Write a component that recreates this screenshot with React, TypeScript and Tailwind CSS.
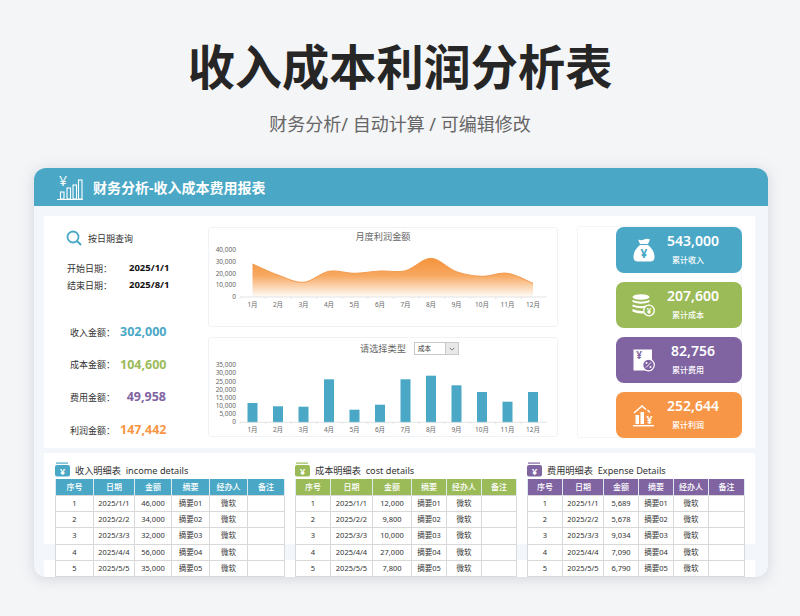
import { ReactNode } from "react";

const CJK = "font-['Noto_Sans','Noto_Sans_CJK_SC',sans-serif]";
const MONTHS = ["1月", "2月", "3月", "4月", "5月", "6月", "7月", "8月", "9月", "10月", "11月", "12月"];
const monthX = (i: number) => 43.5 + i * 25.5;

// read off the reference, svg coords
const PROFIT_Y = [18, 29, 36.3, 25.3, 27.3, 25, 24.7, 12.3, 25.7, 30.3, 27.3, 37.3];
const COST_TOPS = [44, 47.3, 47.7, 20.3, 50.7, 45.7, 20.3, 16.7, 26.3, 33, 42.7, 33];

function smoothPath(ys: number[]) {
  const pts = ys.map((y, i) => [monthX(i), y]);
  let d = `M${pts[0][0]} ${pts[0][1]}`;
  for (let i = 0; i < pts.length - 1; i++) {
    const p0 = pts[Math.max(i - 1, 0)];
    const p1 = pts[i];
    const p2 = pts[i + 1];
    const p3 = pts[Math.min(i + 2, pts.length - 1)];
    const c1x = p1[0] + (p2[0] - p0[0]) / 6;
    const c1y = p1[1] + (p2[1] - p0[1]) / 6;
    const c2x = p2[0] - (p3[0] - p1[0]) / 6;
    const c2y = p2[1] - (p3[1] - p1[1]) / 6;
    d += ` C${c1x} ${c1y} ${c2x} ${c2y} ${p2[0]} ${p2[1]}`;
  }
  return d;
}

function Axis({ y, labels }: { y: number; labels: [string, number][] }) {
  return (
    <g fontFamily="'Noto Sans','Noto Sans CJK SC',sans-serif" fontSize="6.5" fill="#666">
      {labels.map(([t, ly]) => (
        <text key={t} x="27" y={ly + 2.3} textAnchor="end">{t}</text>
      ))}
      <line x1="31" x2="338" y1={y} y2={y} stroke="#d9d9d9" strokeWidth="0.7" />
      {MONTHS.map((m, i) => (
        <g key={m}>
          <line x1={31 + i * 25.58} x2={31 + i * 25.58} y1={y} y2={y + 2} stroke="#d9d9d9" strokeWidth="0.7" />
          <text x={monthX(i)} y={y + 9.5} textAnchor="middle">{m}</text>
        </g>
      ))}
    </g>
  );
}

function ProfitChart() {
  const line = smoothPath(PROFIT_Y);
  return (
    <svg viewBox="0 0 348 80" className="w-[348px] h-[80px]">
      <defs>
        <linearGradient id="profitFill" x1="0" y1="0" x2="0" y2="1">
          <stop offset="0" stopColor="#f5933a" />
          <stop offset="0.45" stopColor="#f5933a" stopOpacity="0.8" />
          <stop offset="1" stopColor="#f5933a" stopOpacity="0.02" />
        </linearGradient>
      </defs>
      <path d={`${line} L${monthX(11)} 51 L${monthX(0)} 51 Z`} fill="url(#profitFill)" />
      <path d={line} fill="none" stroke="#f39a4c" strokeWidth="1" />
      <Axis y={51} labels={[["40,000", 4], ["30,000", 15.7], ["20,000", 27.3], ["10,000", 39], ["0", 51]]} />
    </svg>
  );
}

function CostChart() {
  return (
    <svg viewBox="0 0 348 78" className="w-[348px] h-[78px]">
      {COST_TOPS.map((t, i) => (
        <rect key={i} x={monthX(i) - 5} y={t} width="10" height={63.3 - t} fill="#4aa8c6" />
      ))}
      <Axis
        y={63.3}
        labels={[["35,000", 6], ["30,000", 14.1], ["25,000", 22.3], ["20,000", 30.4], ["15,000", 38.6], ["10,000", 46.7], ["5,000", 54.9], ["0", 63]]}
      />
    </svg>
  );
}

const BagIcon = () => (
  <svg viewBox="0 0 22 24" className="w-[22px] h-[24px]">
    <path d="M5 1.5 Q8 3 11 1.5 Q14 0 17 1.5 L15 6 H7 Z" fill="#fff" />
    <path d="M7 7 H15 Q21.5 12 21.5 19 Q21.5 23.5 17 23.5 H5 Q0.5 23.5 0.5 19 Q0.5 12 7 7 Z" fill="#fff" />
    <text x="11" y="20" textAnchor="middle" fontSize="12" fontWeight="700" fill="#4aa8c6" fontFamily="'Noto Sans',sans-serif">¥</text>
  </svg>
);

const CoinsIcon = () => (
  <svg viewBox="0 0 23 23" className="w-[23px] h-[23px]">
    <ellipse cx="9" cy="3" rx="8.5" ry="2.8" fill="#fff" />
    <path d="M0.5 6 Q9 9.5 17.5 6 V8 Q9 11.5 0.5 8 Z" fill="#fff" />
    <path d="M0.5 10.5 Q9 14 17.5 10.5 V12.5 Q9 16 0.5 12.5 Z" fill="#fff" />
    <path d="M0.5 15 Q6 17.5 11 17 L12 19.5 Q5 20 0.5 17.5 Z" fill="#fff" />
    <circle cx="17" cy="16.5" r="5.3" fill="#9bbb59" stroke="#fff" strokeWidth="1.3" />
    <text x="17" y="19.5" textAnchor="middle" fontSize="8" fontWeight="700" fill="#fff" fontFamily="'Noto Sans',sans-serif">¥</text>
  </svg>
);

const FeeIcon = () => (
  <svg viewBox="0 0 22 23" className="w-[22px] h-[23px]">
    <rect x="0.5" y="0.5" width="18.5" height="21" fill="#fff" />
    <text x="6" y="9.5" textAnchor="middle" fontSize="10" fontWeight="700" fill="#8064a2" fontFamily="'Noto Sans',sans-serif">¥</text>
    <circle cx="15.5" cy="16" r="5.8" fill="#8064a2" stroke="#fff" strokeWidth="1.2" />
    <path d="M18 13.5 L13 18.5" stroke="#fff" strokeWidth="1" />
    <circle cx="13.5" cy="14" r="1" fill="#fff" />
    <circle cx="17.5" cy="18" r="1" fill="#fff" />
  </svg>
);

const ProfitIcon = () => (
  <svg viewBox="0 0 22 23" className="w-[22px] h-[23px]">
    <path d="M1 9 L9 2 L13 5.5 M14.5 6 L17 8.5" fill="none" stroke="#fff" strokeWidth="1.5" />
    <rect x="2.5" y="11" width="3.5" height="9" fill="#fff" />
    <rect x="7.5" y="8" width="3.5" height="12" fill="#fff" />
    <text x="16.5" y="19.5" textAnchor="middle" fontSize="10.5" fontWeight="700" fill="#fff" fontFamily="'Noto Sans',sans-serif">¥</text>
    <rect x="0" y="21" width="21" height="1.4" fill="#fff" />
  </svg>
);

const STATS: { value: string; label: string; bg: string; icon: ReactNode }[] = [
  { value: "543,000", label: "累计收入", bg: "bg-[#4aa8c6]", icon: <BagIcon /> },
  { value: "207,600", label: "累计成本", bg: "bg-[#9bbb59]", icon: <CoinsIcon /> },
  { value: "82,756", label: "累计费用", bg: "bg-[#8064a2]", icon: <FeeIcon /> },
  { value: "252,644", label: "累计利润", bg: "bg-[#f79646]", icon: <ProfitIcon /> },
];

const SUMS = [
  { label: "收入金额：", value: "302,000", color: "text-[#4aa8c6]" },
  { label: "成本金额：", value: "104,600", color: "text-[#9bbb59]" },
  { label: "费用金额：", value: "49,958", color: "text-[#8064a2]" },
  { label: "利润金额：", value: "147,442", color: "text-[#f79646]" },
];

const HEADS = ["序号", "日期", "金额", "摘要", "经办人", "备注"];
const DATES = ["2025/1/1", "2025/2/2", "2025/3/3", "2025/4/4", "2025/5/5"];

const TABLES = [
  {
    title: "收入明细表  income details",
    width: "w-[229px]",
    tint: "bg-[#4aa8c6]",
    fill: "#4aa8c6",
    cols: ["w-[38px]", "w-[41px]", "w-[37px]", "w-[38px]", "w-[38px]", "w-[37px]"],
    amounts: ["46,000", "34,000", "32,000", "56,000", "35,000"],
  },
  {
    title: "成本明细表  cost details",
    width: "w-[221px]",
    tint: "bg-[#9bbb59]",
    fill: "#9bbb59",
    cols: ["w-[35px]", "w-[42px]", "w-[39px]", "w-[35px]", "w-[35px]", "w-[35px]"],
    amounts: ["12,000", "9,800", "10,000", "27,000", "7,800"],
  },
  {
    title: "费用明细表  Expense Details",
    width: "w-[217px]",
    tint: "bg-[#8064a2]",
    fill: "#8064a2",
    cols: ["w-[35px]", "w-[41px]", "w-[35px]", "w-[35px]", "w-[35px]", "w-[36px]"],
    amounts: ["5,689", "5,678", "9,034", "7,090", "6,790"],
  },
];

function DetailTable({ t }: { t: (typeof TABLES)[number] }) {
  return (
    <div className={t.width}>
      <div className="h-[26px] flex items-end pb-[2px] gap-[5px]">
        <svg viewBox="0 0 15 15" className="w-[15px] h-[15px]">
          <rect x="1" y="0.5" width="12" height="1.2" fill={t.fill} />
          <rect x="0" y="3" width="15" height="11.5" rx="2" fill={t.fill} />
          <text x="7.5" y="12.5" textAnchor="middle" fontSize="9" fontWeight="700" fill="#fff" fontFamily="'Noto Sans',sans-serif">¥</text>
        </svg>
        <span className="text-[9.2px] leading-[12px] text-[#333] whitespace-pre">{t.title}</span>
      </div>
      <table className="table-fixed border-collapse w-full text-center bg-white">
        <colgroup>
          {t.cols.map((c, i) => (
            <col key={i} className={c} />
          ))}
        </colgroup>
        <thead>
          <tr className={t.tint}>
            {HEADS.map((h) => (
              <th key={h} className="h-[16.4px] p-0 text-[8px] leading-none font-medium text-white border-x border-[#dfeaf0]">{h}</th>
            ))}
          </tr>
        </thead>
        <tbody>
          {DATES.map((d, i) => (
            <tr key={d} className="h-[16.3px]">
              {[String(i + 1), d, t.amounts[i], `摘要0${i + 1}`, "微软", ""].map((c, j) => (
                <td key={j} className="p-0 text-[7.5px] leading-none text-[#333] border border-[#d9d9d9]">{c}</td>
              ))}
            </tr>
          ))}
        </tbody>
      </table>
    </div>
  );
}

export default function App() {
  return (
    <div className={`w-[800px] h-[616px] overflow-hidden bg-[#f4f5f7] ${CJK}`}>
      <h1 className="pt-[36px] h-[100px] text-center text-[47.2px] leading-[62px] font-bold text-[#262626]">收入成本利润分析表</h1>
      <p className="mt-[11px] h-[57px] text-center text-[18px] leading-[27px] text-[#666]">财务分析/ 自动计算 / 可编辑修改</p>

      <div className="mx-[34px] w-[734px] h-[409px] rounded-[12px] overflow-hidden bg-[#f3f6fa] shadow-[0_2px_14px_rgba(110,125,140,0.25)]">
        <div className="h-[38px] bg-[#4aa8c6] flex items-center pl-[23px] gap-[9px]">
          <svg viewBox="0 0 27 27" className="w-[27px] h-[27px] overflow-visible">
            <text x="6" y="12" textAnchor="middle" fontSize="14" fill="#fff" fontFamily="'Noto Sans',sans-serif">¥</text>
            <g fill="none" stroke="#fff" strokeWidth="1.1">
              <rect x="3.5" y="18" width="3.5" height="7" />
              <rect x="10" y="14" width="3.5" height="11" />
              <rect x="16" y="11" width="3.5" height="14" />
              <rect x="21.5" y="6" width="3.5" height="19" />
            </g>
            <line x1="0" x2="26" y1="25.5" y2="25.5" stroke="#fff" strokeWidth="1.2" />
          </svg>
          <span className="text-[14px] font-bold text-white">财务分析-收入成本费用报表</span>
        </div>

        <div className="mt-[10px] mx-[10px] w-[711px] h-[232px] bg-white flex">
          <div className="w-[164px] text-[#333]">
            <div className="h-[42px] pt-[2px] pl-[22px] flex items-center gap-[6px]">
              <svg viewBox="0 0 16 16" className="w-[16px] h-[16px]">
                <circle cx="7" cy="7" r="5.5" fill="none" stroke="#4aa8c6" strokeWidth="1.8" />
                <path d="M11 11 L15 15" stroke="#4aa8c6" strokeWidth="2" />
              </svg>
              <span className="text-[9px] leading-none">按日期查询</span>
            </div>
            <div className="mt-[2px] pl-[23px]">
              <div className="flex h-[17px] mt-[2px] items-center">
                <span className="w-[62px] text-[9px]">开始日期：</span>
                <span className="text-[9.5px] font-bold text-[#111]">2025/1/1</span>
              </div>
              <div className="flex h-[17px] items-center">
                <span className="w-[62px] text-[9px]">结束日期：</span>
                <span className="text-[9.5px] font-bold text-[#111]">2025/8/1</span>
              </div>
            </div>
            <div className="mt-[22px] pl-[26px]">
              {SUMS.map((s) => (
                <div key={s.label} className="h-[32.7px] flex items-center">
                  <span className="w-[50px] text-[9px] whitespace-nowrap">{s.label}</span>
                  <span className={`w-[46px] text-right text-[12.5px] font-bold whitespace-nowrap ${s.color}`}>{s.value}</span>
                </div>
              ))}
            </div>
          </div>

          <div className="w-[350px] pt-[11px] flex flex-col gap-[10px]">
            <div className="h-[100px] border border-[#f0f3f6] rounded-[3px]">
              <div className="h-[18px] flex items-center justify-center text-[9.2px] text-[#666]">月度利润金额</div>
              <ProfitChart />
            </div>
            <div className="h-[100px] border border-[#f0f3f6] rounded-[3px]">
              <div className="h-[21px] flex items-center">
                <span className="ml-[151px] w-[54px] text-[9.2px] text-[#666]">请选择类型</span>
                <div className="h-[13px] w-[45px] flex border border-[#c9c9c9] bg-white">
                  <span className="flex-1 pl-[3px] text-[6.5px] leading-[11px] text-[#333]">成本</span>
                  <span className="w-[13px] bg-[#e8e8e8] border-l border-[#c9c9c9] flex items-center justify-center">
                    <svg viewBox="0 0 8 5" className="w-[6px] h-[4px]"><path d="M1 1 L4 4 L7 1" fill="none" stroke="#555" strokeWidth="1" /></svg>
                  </span>
                </div>
              </div>
              <CostChart />
            </div>
          </div>

          <div className="ml-[19px] w-[165px] h-[212px] mt-[10px] border border-[#f3f5f8] rounded-[3px] pl-[38px] flex flex-col gap-[9px]">
            {STATS.map((s) => (
              <div key={s.label} className={`w-[126px] h-[46px] shrink-0 rounded-[8px] flex items-center text-white ${s.bg}`}>
                <div className="w-[52px] flex justify-center pl-[3px]">{s.icon}</div>
                <div className="w-[50px] self-start pt-[5px] flex flex-col items-center">
                  <span className="text-[14px] leading-[18px] font-semibold whitespace-nowrap">{s.value}</span>
                  <span className="text-[8px] leading-[12px] mt-[4px] mr-[10px] font-medium">{s.label}</span>
                </div>
              </div>
            ))}
          </div>
        </div>

        <div className="mt-[5px] mx-[10px] w-[711px] h-[130px] bg-[linear-gradient(to_bottom,#fff_91px,#f3f6fa_91px,#f3f6fa_107px,#fff_107px)] pl-[11px] flex gap-[11px]">
          {TABLES.map((t) => (
            <DetailTable key={t.title} t={t} />
          ))}
        </div>
      </div>
    </div>
  );
}
